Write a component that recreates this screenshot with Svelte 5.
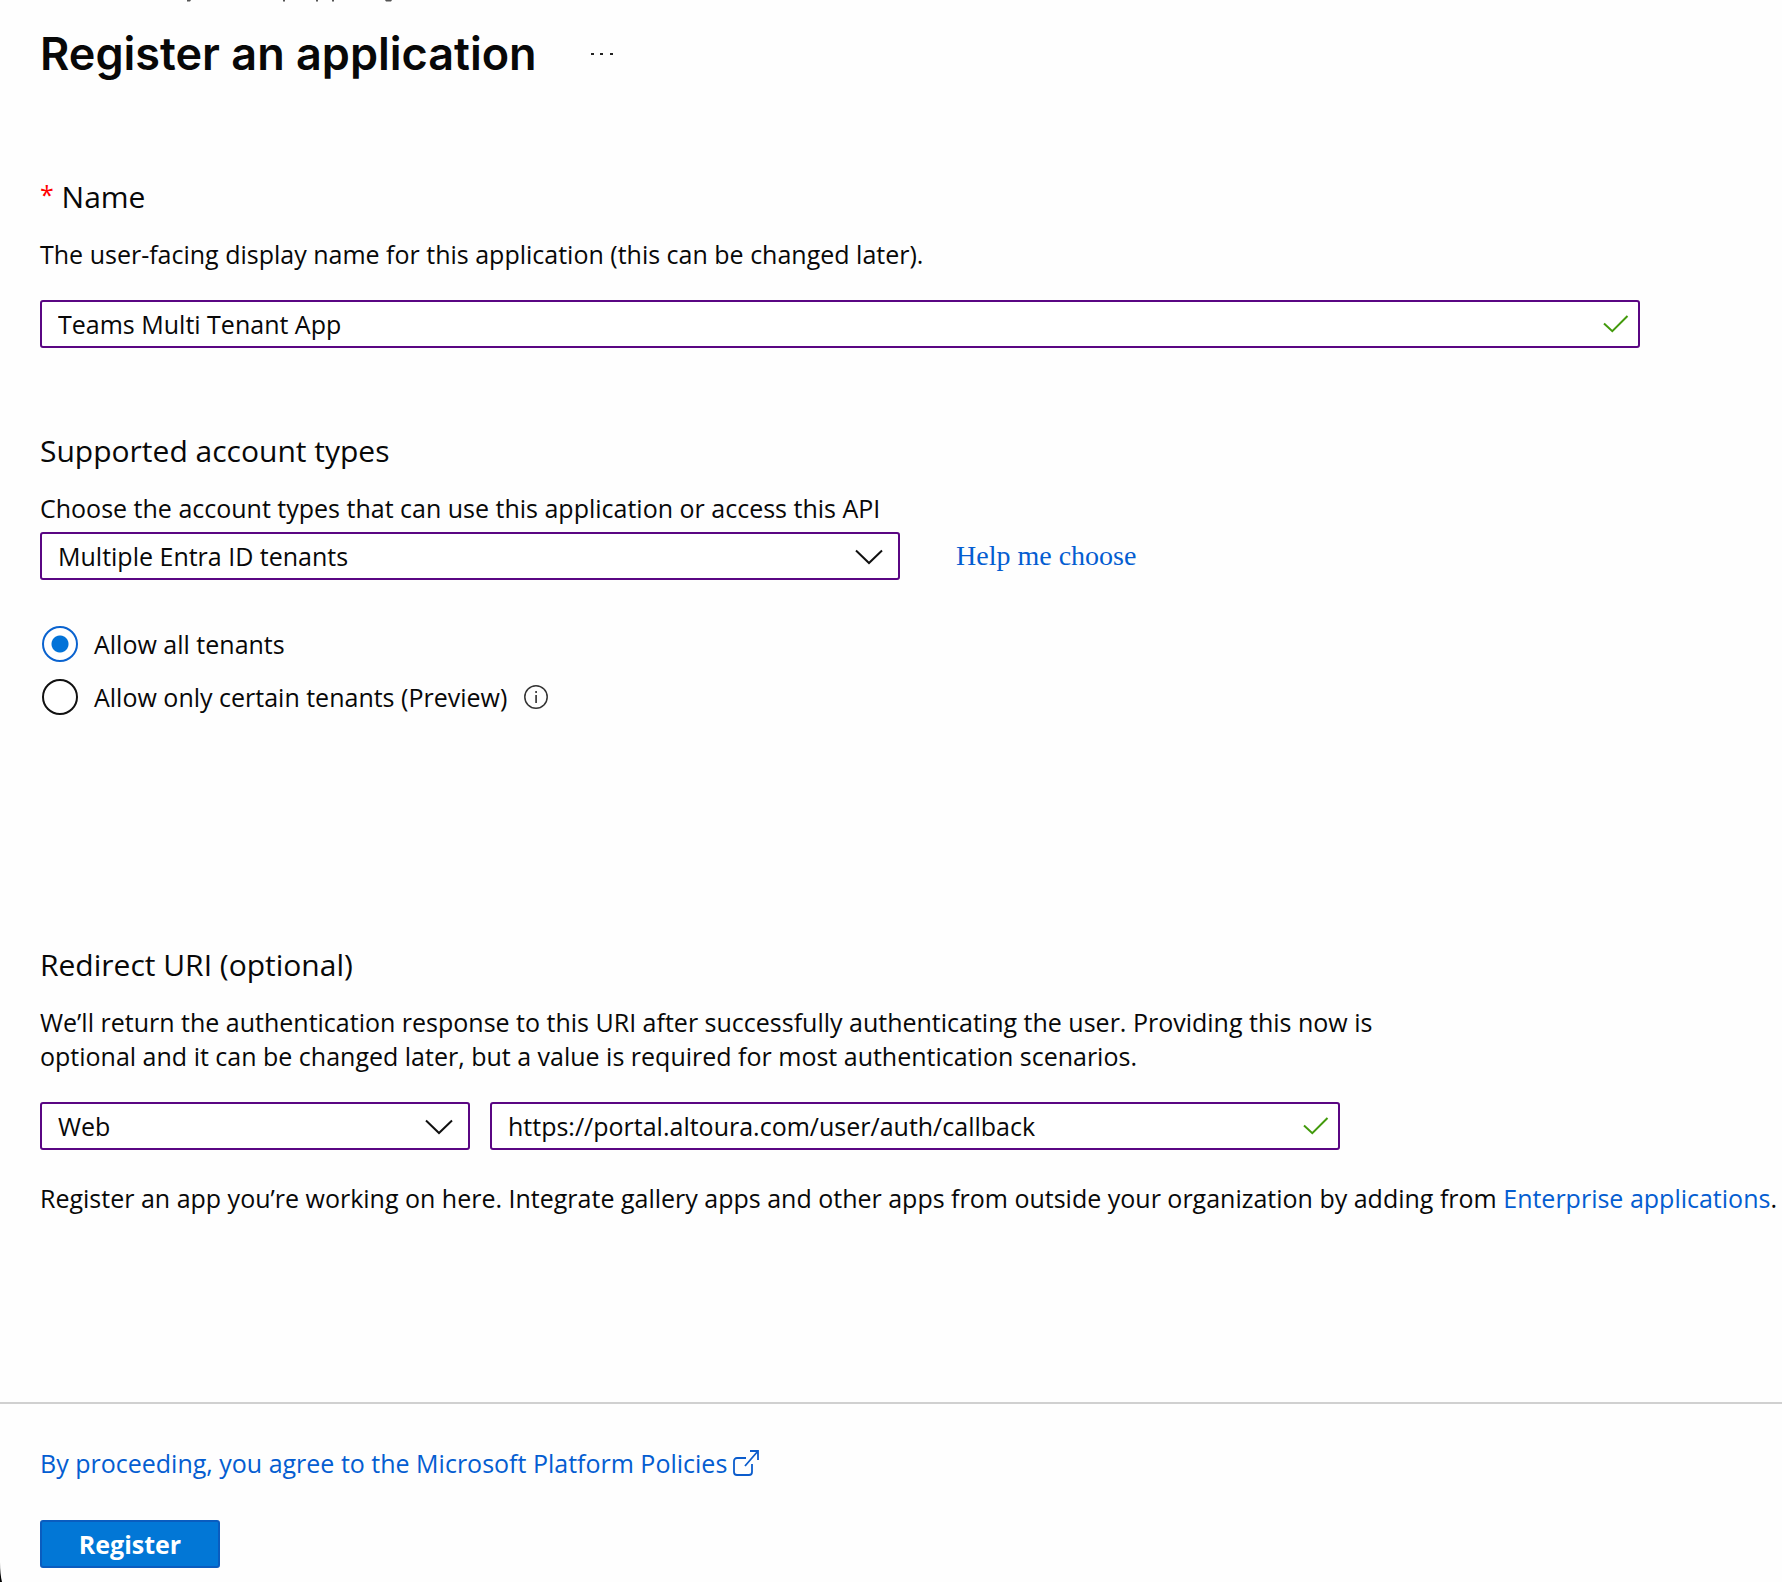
<script lang="ts">
	const accountTypes = ['Multiple Entra ID tenants'];
	const platforms = ['Web'];
	const tenantOptions = [
		{ value: 'all', label: 'Allow all tenants', info: false },
		{ value: 'certain', label: 'Allow only certain tenants (Preview)', info: true }
	];

	let name = $state('Teams Multi Tenant App');
	let accountType = $state(accountTypes[0]);
	let tenantAccess = $state('all');
	let platform = $state(platforms[0]);
	let redirectUri = $state('https://portal.altoura.com/user/auth/callback');
</script>

{#snippet check()}
	<svg class="field__check" viewBox="0 0 26 20" aria-hidden="true">
		<path d="M1 9.5 9.3 17.2 24.5 2" fill="none" stroke="#429a0c" stroke-width="2" />
	</svg>
{/snippet}

{#snippet chevron()}
	<svg class="field__chevron" viewBox="0 0 28 16" aria-hidden="true">
		<path d="M1 1.5 14 14 27 1.5" fill="none" stroke="#111" stroke-width="2" />
	</svg>
{/snippet}

<div class="page">
	<svg class="page__trail" viewBox="0 0 400 2" aria-hidden="true">
		<path d="M187 0h4l-1 1.5h-3zM283 0h2v1.5h-2zM316 0h2v1.5h-2zM332 0h2v1.5h-2zM385 0h7l-1 1.5h-5z" fill="#555" />
	</svg>

	<form class="form" onsubmit={(e) => e.preventDefault()}>
		<header class="header">
			<h1 class="header__title">Register an application</h1>
			<button type="button" class="header__more" aria-label="More actions">
				<svg viewBox="0 0 22 4" aria-hidden="true">
					<path d="M0 1h3v2H0zM9 1h3v2H9zM19 1h3v2h-3z" fill="#222" />
				</svg>
			</button>
		</header>

		<section class="section section--name">
			<h2 class="section__title">
				<label for="name"><span class="required">*</span> Name</label>
			</h2>
			<p class="text">The user-facing display name for this application (this can be changed later).</p>
			<div class="field field--name">
				<input id="name" class="field__control" type="text" bind:value={name} />
				{@render check()}
			</div>
		</section>

		<section class="section section--accounts">
			<h2 class="section__title">Supported account types</h2>
			<label class="text" for="account-type">
				Choose the account types that can use this application or access this API
			</label>
			<div class="row row--accounts">
				<div class="field field--account">
					<select id="account-type" class="field__control" bind:value={accountType}>
						{#each accountTypes as type}
							<option>{type}</option>
						{/each}
					</select>
					{@render chevron()}
				</div>
				<a class="help" href="#help">Help me choose</a>
			</div>
			<div class="radios" role="radiogroup" aria-label="Tenant access">
				{#each tenantOptions as option}
					<div class="radio">
						<label class="radio__label">
							<input class="radio__input" type="radio" name="tenants" value={option.value} bind:group={tenantAccess} />
							{option.label}
						</label>
						{#if option.info}
							<svg class="radio__info" viewBox="0 0 26 26" aria-hidden="true">
								<circle cx="13" cy="13" r="11.2" fill="none" stroke="#333" stroke-width="1.5" />
								<path d="M12.2 7h1.8v2h-1.8zM12.2 11h1.8v8h-1.8z" fill="#444" />
							</svg>
						{/if}
					</div>
				{/each}
			</div>
		</section>

		<section class="section section--redirect">
			<h2 class="section__title">Redirect URI (optional)</h2>
			<p class="text text--narrow">
				We’ll return the authentication response to this URI after successfully authenticating the user. Providing this now is
				optional and it can be changed later, but a value is required for most authentication scenarios.
			</p>
			<div class="row row--redirect">
				<div class="field field--platform">
					<select class="field__control" aria-label="Platform" bind:value={platform}>
						{#each platforms as item}
							<option>{item}</option>
						{/each}
					</select>
					{@render chevron()}
				</div>
				<div class="field field--uri">
					<input class="field__control" type="text" aria-label="Redirect URI" bind:value={redirectUri} />
					{@render check()}
				</div>
			</div>
			<p class="text">
				Register an app you’re working on here. Integrate gallery apps and other apps from outside your organization by adding from
				<a class="link" href="#enterprise">Enterprise applications</a>.
			</p>
		</section>

		<footer class="footer">
			<a class="link link--policies" href="#policies">
				By proceeding, you agree to the Microsoft Platform Policies
				<svg class="link__icon" viewBox="0 0 28 28" aria-hidden="true">
					<path
						d="M14 9H5a3 3 0 0 0-3 3v11a3 3 0 0 0 3 3h12a3 3 0 0 0 3-3v-8M18 2h8v9M26 2 13 17"
						fill="none"
						stroke="#0b5ccc"
						stroke-width="1.8"
					/>
				</svg>
			</a>
			<button type="submit" class="submit">Register</button>
		</footer>
	</form>

	<svg class="page__corner" viewBox="0 0 3 20" aria-hidden="true">
		<path d="M0 0q0 12 2 20H0z" fill="#000" />
	</svg>
</div>

<style>
	:global(body) {
		background: #fefefe;
	}

	.page {
		--font: 'Open Sans', 'Noto Sans', sans-serif;
		--purple: #5a0683;
		--link: #045dd1;
		position: relative;
		min-height: 100vh;
		color: #080808;
		font-family: var(--font);
		font-size: 25px;
		line-height: 34px;
	}

	.page__trail {
		position: absolute;
		top: 0;
		left: 0;
		width: 400px;
		height: 2px;
	}

	.page__corner {
		position: absolute;
		bottom: 0;
		left: 0;
		width: 3px;
		height: 20px;
	}

	.header {
		display: flex;
		align-items: center;
		gap: 54px;
		padding: 24px 40px 0;
	}

	.header__title {
		margin: 0;
		font-family: Inter, sans-serif;
		font-size: 45px;
		font-weight: 600;
		line-height: 60px;
	}

	.header__more {
		display: flex;
		padding: 0;
		border: 0;
		background: none;
	}

	.header__more svg {
		width: 22px;
		height: 4px;
	}

	.section {
		padding-left: 40px;
	}

	.section--name {
		margin-top: 92px;
	}

	.section--accounts {
		margin-top: 82px;
	}

	.section--redirect {
		margin-top: 229px;
	}

	.section__title {
		margin: 0 0 19px;
		font-size: 30px;
		font-weight: 400;
		line-height: 42px;
	}

	.required {
		color: #f00;
		font-size: 25px;
		line-height: 1;
		vertical-align: 4px;
	}

	.text {
		display: block;
		margin: 0;
	}

	.text--narrow {
		max-width: 1340px;
	}

	.row {
		display: flex;
	}

	.row--accounts {
		align-items: center;
		gap: 56px;
		margin-top: 7px;
	}

	.row--redirect {
		gap: 20px;
		margin: 29px 0 31px;
	}

	.field {
		position: relative;
		width: 100%;
	}

	.field--name {
		max-width: 1600px;
		margin-top: 29px;
	}

	.field--account {
		max-width: 860px;
	}

	.field--platform {
		max-width: 430px;
	}

	.field--uri {
		max-width: 850px;
	}

	.field__control {
		display: block;
		box-sizing: border-box;
		width: 100%;
		height: 48px;
		margin: 0;
		padding: 0 56px 0 16px;
		border: 2px solid var(--purple);
		border-radius: 3px;
		background: #fff;
		color: inherit;
		font: inherit;
		appearance: none;
	}

	.field__check {
		position: absolute;
		top: 14px;
		right: 11px;
		width: 26px;
		height: 20px;
	}

	.field__chevron {
		position: absolute;
		top: 17px;
		right: 17px;
		width: 28px;
		height: 16px;
		pointer-events: none;
	}

	.help {
		flex-shrink: 0;
		color: var(--link);
		font-family: 'Liberation Serif', serif;
		font-size: 28px;
		text-decoration: none;
	}

	.radios {
		display: flex;
		flex-direction: column;
		gap: 17px;
		margin-top: 46px;
	}

	.radio {
		display: flex;
		align-items: center;
		gap: 16px;
	}

	.radio__label {
		display: flex;
		align-items: center;
		gap: 16px;
	}

	.radio__input {
		box-sizing: border-box;
		width: 36px;
		height: 36px;
		margin: 0 0 0 2px;
		border: 2px solid #111;
		border-radius: 50%;
		background: #fff;
		appearance: none;
	}

	.radio__input:checked {
		border-color: #0a63cf;
		background: radial-gradient(circle, #0273d8 8px, #fff 9px);
	}

	.radio__info {
		width: 26px;
		height: 26px;
	}

	.link {
		color: var(--link);
		text-decoration: none;
	}

	.link--policies {
		display: flex;
		align-items: center;
		gap: 5px;
	}

	.link__icon {
		width: 28px;
		height: 28px;
	}

	.footer {
		display: flex;
		flex-direction: column;
		align-items: flex-start;
		gap: 40px;
		margin-top: 187px;
		padding: 42px 40px 14px;
		border-top: 2px solid #d0d0d0;
	}

	.submit {
		min-width: 180px;
		height: 48px;
		padding: 0 36px;
		border: 2px solid #0a5cbf;
		border-radius: 3px;
		background: #0277d6;
		color: #fff;
		font: inherit;
		font-weight: 700;
		line-height: 34px;
	}
</style>
